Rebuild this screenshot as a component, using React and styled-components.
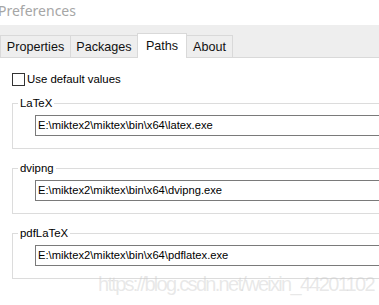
import styled, { createGlobalStyle } from "styled-components";

const Global = createGlobalStyle`
  html, body {
    margin: 0;
    padding: 0;
    background: #ffffff;
    overflow: hidden;
  }
  body {
    font-family: "Liberation Sans", "Noto Sans", sans-serif;
    color: #000;
  }
`;

const Window = styled.div`
  position: relative;
  width: 379px;
  height: 305px;
  overflow: hidden;
  background: #fff;
`;

const Title = styled.div`
  height: 25px;
  line-height: 21px;
  margin-left: -2px;
  font-family: "Noto Sans", sans-serif;
  font-size: 14px;
  color: #a6a6a6;
`;

const TabBar = styled.div`
  display: flex;
  align-items: flex-end;
  height: 33px;
  background: #eeeeee;
  border-bottom: 1px solid #d9d9d9;
  box-sizing: border-box;
`;

const Tab = styled.div`
  box-sizing: border-box;
  width: ${(p) => p.$w}px;
  height: ${(p) => (p.$active ? 25 : 22)}px;
  margin-bottom: ${(p) => (p.$active ? -1 : 0)}px;
  margin-left: -1px;
  display: flex;
  align-items: center;
  justify-content: center;
  font-size: 12.6px;
  color: #111;
  background: ${(p) => (p.$active ? "#ffffff" : "#eeeeee")};
  border: 1px solid #d9d9d9;
  border-bottom: none;
  position: relative;
  z-index: ${(p) => (p.$active ? 1 : 0)};
  &:first-child {
    margin-left: 0;
  }
`;

const Content = styled.div`
  padding: 14px 0 0 12px;
`;

const CheckRow = styled.label`
  display: flex;
  align-items: center;
  gap: 2px;
  height: 14px;
  font-size: 11.4px;
`;

const Box = styled.span`
  box-sizing: border-box;
  width: 13px;
  height: 13px;
  border: 1px solid #333;
  background: #fff;
`;

const Group = styled.fieldset`
  width: 420px;
  margin: ${(p) => p.$gap}px 0 0 0;
  padding: 5px 0 12px 22px;
  border: 1px solid #dcdcdc;
  box-sizing: border-box;
`;

const Legend = styled.legend`
  font-size: 11.4px;
  line-height: 14px;
  padding: 0 2px;
  margin-left: -17px;
`;

const PathInput = styled.div`
  box-sizing: border-box;
  height: 21px;
  border: 1px solid #7a7a7a;
  padding-left: 2px;
  font-size: 11.2px;
  line-height: 19px;
  white-space: nowrap;
`;

const Watermark = styled.div`
  position: absolute;
  left: 98px;
  top: 273px;
  font-family: "Liberation Sans", Arial, sans-serif;
  font-size: 20px;
  letter-spacing: -1.7px;
  color: rgba(200, 200, 200, 0.42);
  pointer-events: none;
  white-space: nowrap;
`;

const tabs = [
  { name: "Properties", w: 71 },
  { name: "Packages", w: 68 },
  { name: "Paths", w: 50, active: true },
  { name: "About", w: 47 },
];

const groups = [
  { name: "LaTeX", gap: 10, path: "E:\\miktex2\\miktex\\bin\\x64\\latex.exe" },
  { name: "dvipng", gap: 12, path: "E:\\miktex2\\miktex\\bin\\x64\\dvipng.exe" },
  { name: "pdfLaTeX", gap: 12, path: "E:\\miktex2\\miktex\\bin\\x64\\pdflatex.exe" },
];

export default function App() {
  return (
    <Window>
      <Global />
      <Title>Preferences</Title>
      <TabBar>
        {tabs.map((t) => (
          <Tab key={t.name} $w={t.w} $active={t.active}>
            {t.name}
          </Tab>
        ))}
      </TabBar>
      <Content>
        <CheckRow>
          <Box />
          Use default values
        </CheckRow>
        {groups.map((g) => (
          <Group key={g.name} $gap={g.gap}>
            <Legend>{g.name}</Legend>
            <PathInput>{g.path}</PathInput>
          </Group>
        ))}
      </Content>
      <Watermark>https://blog.csdn.net/weixin_44201102</Watermark>
    </Window>
  );
}
